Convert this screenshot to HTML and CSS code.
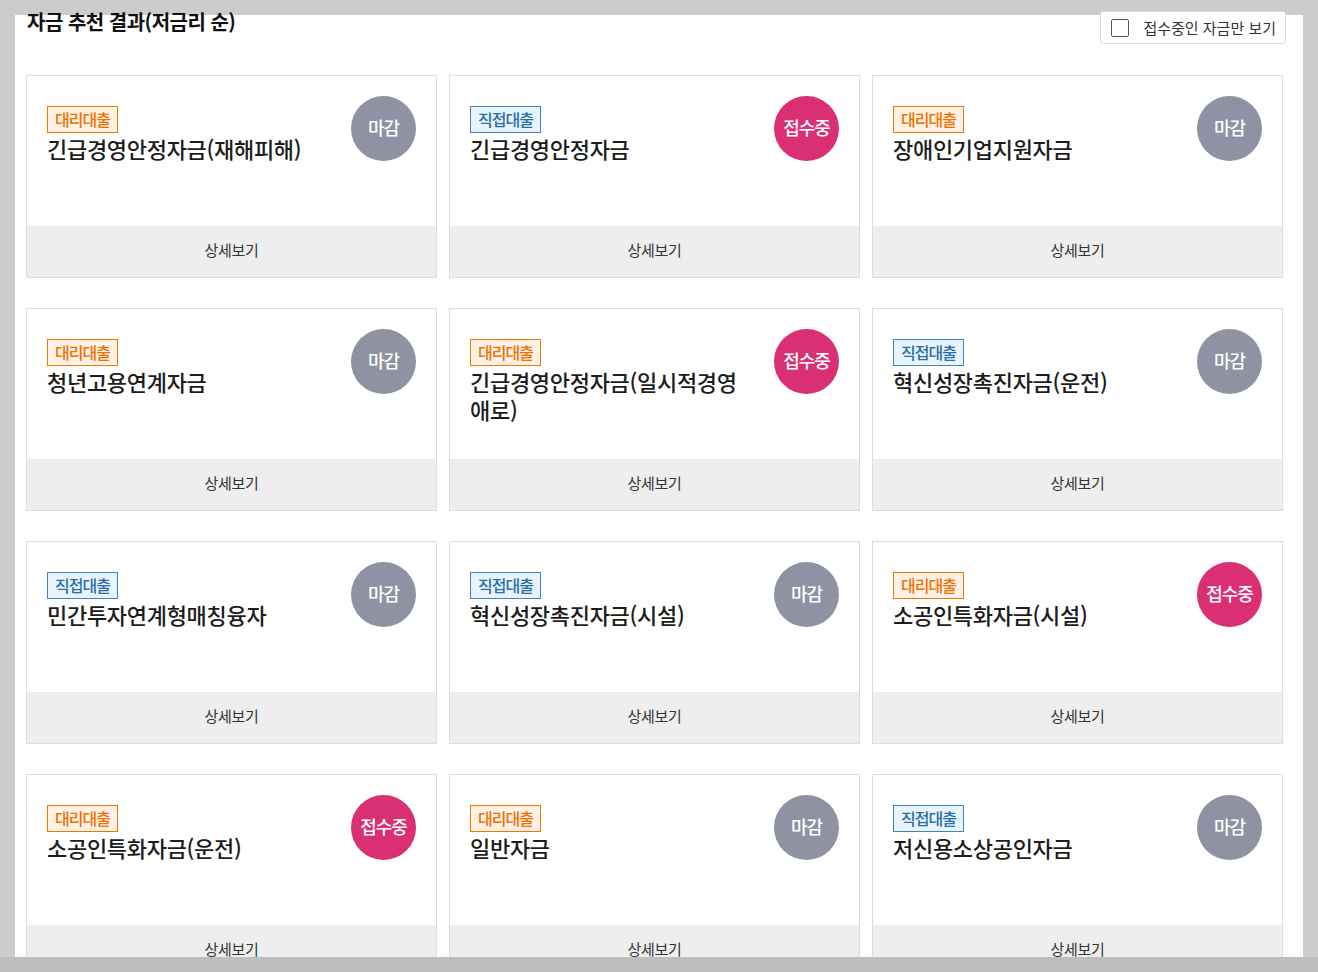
FILE: index.html
```html
<!DOCTYPE html>
<html lang="ko">
<head>
    <meta charset="UTF-8">
    <meta name="viewport" content="width=device-width, initial-scale=1.0">
    <title>자금 추천 결과</title>
    <link rel="stylesheet" href="styles.css">
</head>
<body>

    <div class="panel">
        <div class="panel-head">
            <h2 class="panel-title">자금 추천 결과(저금리 순)</h2>
            <label class="only-open">
                <input type="checkbox" class="only-open-check">
                <span class="only-open-box"></span>
                <span>접수중인 자금만 보기</span>
            </label>
        </div>

        <!-- 추천 자금 목록 -->
        <div class="fund-list">
            <div class="fund-card">
                <div class="fund-top">
                    <div class="fund-info">
                        <span class="tag tag-agent">대리대출</span>
                        <p class="fund-name">긴급경영안정자금(재해피해)</p>
                    </div>
                    <span class="status status-closed">마감</span>
                </div>
                <a class="fund-more" href="#">상세보기</a>
            </div>
            <div class="fund-card">
                <div class="fund-top">
                    <div class="fund-info">
                        <span class="tag tag-direct">직접대출</span>
                        <p class="fund-name">긴급경영안정자금</p>
                    </div>
                    <span class="status status-open">접수중</span>
                </div>
                <a class="fund-more" href="#">상세보기</a>
            </div>
            <div class="fund-card">
                <div class="fund-top">
                    <div class="fund-info">
                        <span class="tag tag-agent">대리대출</span>
                        <p class="fund-name">장애인기업지원자금</p>
                    </div>
                    <span class="status status-closed">마감</span>
                </div>
                <a class="fund-more" href="#">상세보기</a>
            </div>

            <div class="fund-card">
                <div class="fund-top">
                    <div class="fund-info">
                        <span class="tag tag-agent">대리대출</span>
                        <p class="fund-name">청년고용연계자금</p>
                    </div>
                    <span class="status status-closed">마감</span>
                </div>
                <a class="fund-more" href="#">상세보기</a>
            </div>
            <div class="fund-card">
                <div class="fund-top">
                    <div class="fund-info">
                        <span class="tag tag-agent">대리대출</span>
                        <p class="fund-name">긴급경영안정자금(일시적경영애로)</p>
                    </div>
                    <span class="status status-open">접수중</span>
                </div>
                <a class="fund-more" href="#">상세보기</a>
            </div>
            <div class="fund-card">
                <div class="fund-top">
                    <div class="fund-info">
                        <span class="tag tag-direct">직접대출</span>
                        <p class="fund-name">혁신성장촉진자금(운전)</p>
                    </div>
                    <span class="status status-closed">마감</span>
                </div>
                <a class="fund-more" href="#">상세보기</a>
            </div>

            <div class="fund-card">
                <div class="fund-top">
                    <div class="fund-info">
                        <span class="tag tag-direct">직접대출</span>
                        <p class="fund-name">민간투자연계형매칭융자</p>
                    </div>
                    <span class="status status-closed">마감</span>
                </div>
                <a class="fund-more" href="#">상세보기</a>
            </div>
            <div class="fund-card">
                <div class="fund-top">
                    <div class="fund-info">
                        <span class="tag tag-direct">직접대출</span>
                        <p class="fund-name">혁신성장촉진자금(시설)</p>
                    </div>
                    <span class="status status-closed">마감</span>
                </div>
                <a class="fund-more" href="#">상세보기</a>
            </div>
            <div class="fund-card">
                <div class="fund-top">
                    <div class="fund-info">
                        <span class="tag tag-agent">대리대출</span>
                        <p class="fund-name">소공인특화자금(시설)</p>
                    </div>
                    <span class="status status-open">접수중</span>
                </div>
                <a class="fund-more" href="#">상세보기</a>
            </div>

            <div class="fund-card">
                <div class="fund-top">
                    <div class="fund-info">
                        <span class="tag tag-agent">대리대출</span>
                        <p class="fund-name">소공인특화자금(운전)</p>
                    </div>
                    <span class="status status-open">접수중</span>
                </div>
                <a class="fund-more" href="#">상세보기</a>
            </div>
            <div class="fund-card">
                <div class="fund-top">
                    <div class="fund-info">
                        <span class="tag tag-agent">대리대출</span>
                        <p class="fund-name">일반자금</p>
                    </div>
                    <span class="status status-closed">마감</span>
                </div>
                <a class="fund-more" href="#">상세보기</a>
            </div>
            <div class="fund-card">
                <div class="fund-top">
                    <div class="fund-info">
                        <span class="tag tag-direct">직접대출</span>
                        <p class="fund-name">저신용소상공인자금</p>
                    </div>
                    <span class="status status-closed">마감</span>
                </div>
                <a class="fund-more" href="#">상세보기</a>
            </div>
        </div>
    </div>

    <div class="bottom-shade"></div>

</body>
</html>
```

FILE: styles.css
```css
body {
    font-family: "Noto Sans CJK KR", "Noto Sans", sans-serif;
    margin: 0;
    background-color: #cccccc;
    color: #222;
    height: 972px;
    overflow: hidden;
}
.panel {
    display: flow-root;
    margin: 15px 15px 0 15px;
    padding: 0 17px 40px 11px;
    background: #fff;
    min-height: 1200px;
}
.panel-head {
    display: flex;
    justify-content: space-between;
    align-items: flex-start;
    margin-top: -4px;
}
.panel-title {
    margin: 0;
    padding-left: 1px;
    font-size: 20px;
    line-height: 22px;
    font-weight: 700;
    letter-spacing: -0.5px;
    color: #111;
}
.only-open {
    display: flex;
    align-items: center;
    gap: 14px;
    height: 31px;
    padding: 0 9px 0 10px;
    background: #fff;
    border: 1px solid #dcdcdc;
    border-radius: 3px;
    font-size: 15px;
    color: #333;
    cursor: pointer;
}
.only-open-check {
    display: none;
}
.only-open-box {
    width: 16px;
    height: 16px;
    border: 1px solid #555;
    border-radius: 2px;
}
.fund-list {
    display: grid;
    grid-template-columns: repeat(3, 1fr);
    column-gap: 12px;
    row-gap: 30px;
    margin-top: 31px;
    margin-right: 3px;
}
.fund-card {
    border: 1px solid #dddddd;
    display: flex;
    flex-direction: column;
}
.fund-top {
    display: flex;
    gap: 20px;
    height: 110px;
    padding: 20px;
}
.fund-info {
    flex: 1;
    min-width: 0;
    padding-top: 10px;
}
.tag {
    display: inline-block;
    height: 25px;
    line-height: 24px;
    padding: 0 7px;
    font-size: 16px;
    font-weight: 500;
    letter-spacing: -1px;
}
.tag-agent {
    color: #f07000;
    background: #fff1e6;
    border: 1px solid #f07800;
}
.tag-direct {
    color: #2a6ea8;
    background: #e9f3fc;
    border: 1px solid #3d84c4;
}
.fund-name {
    margin: 1px 0 0;
    font-size: 22px;
    line-height: 28px;
    font-weight: 500;
    letter-spacing: -0.3px;
    color: #1c1c1c;
}
.status {
    flex: none;
    box-sizing: border-box;
    width: 65px;
    height: 65px;
    padding-bottom: 3px;
    border-radius: 50%;
    display: flex;
    align-items: center;
    justify-content: center;
    color: #fff;
    font-size: 18px;
    font-weight: 500;
    letter-spacing: -1px;
}
.status-closed {
    background-color: #8e92a2;
}
.status-open {
    background-color: #da2f72;
}
.fund-more {
    display: block;
    height: 51px;
    line-height: 47px;
    text-align: center;
    background-color: #eeeeee;
    color: #333;
    font-size: 15px;
    letter-spacing: -0.3px;
    text-decoration: none;
}
.bottom-shade {
    position: fixed;
    left: 0;
    right: 0;
    bottom: 0;
    height: 15px;
    background-color: #bebebe;
}
```
